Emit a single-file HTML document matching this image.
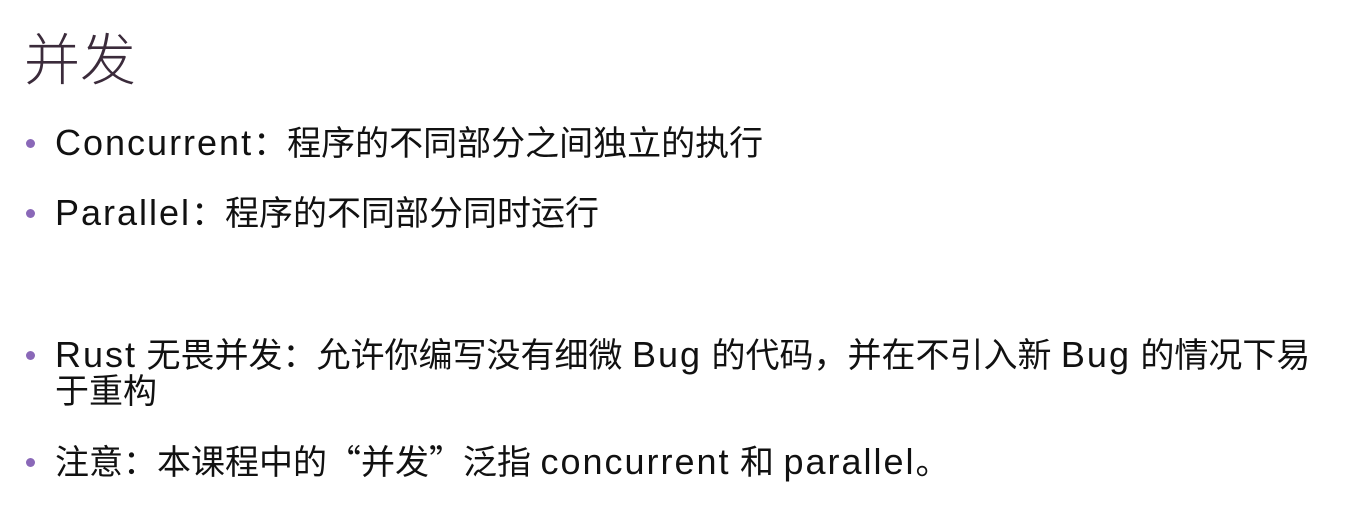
<!DOCTYPE html>
<html><head><meta charset="utf-8"><style>
body{margin:0;width:1360px;height:524px;background:#fff;overflow:hidden;position:relative;font-family:"Liberation Sans","Noto Sans CJK SC",sans-serif;}
.t{position:absolute;left:24px;top:16px;font-size:56px;color:#3b2b3b;font-family:"Noto Sans CJK SC",sans-serif;font-weight:300;}
.l{position:absolute;left:55px;font-size:34px;color:#111;white-space:nowrap;line-height:38px;}
.l .en{font-size:36px;letter-spacing:2px;}
.c{font-family:"Noto Sans CJK SC",sans-serif;}
.b{position:absolute;left:26px;width:9px;height:9px;border-radius:50%;background:#8a68b8;}
</style></head><body>
<div class="t">并发</div>
<div class="b" style="top:139px"></div>
<div class="l" style="top:122px"><span class="en">Concurrent</span><span class="c">：程序的不同部分之间独立的执行</span></div>
<div class="b" style="top:209px"></div>
<div class="l" style="top:192px"><span class="en">Parallel</span><span class="c">：程序的不同部分同时运行</span></div>
<div class="b" style="top:351px"></div>
<div class="l" style="top:334px"><span class="en">Rust</span> <span class="c">无畏并发：允许你编写没有细微</span> <span class="en">Bug</span> <span class="c">的代码，并在不引入新</span> <span class="en">Bug</span> <span class="c">的情况下易</span></div>
<div class="l" style="top:370px"><span class="c">于重构</span></div>
<div class="b" style="top:458px"></div>
<div class="l" style="top:441px"><span class="c">注意：本课程中的“并发”泛指</span> <span class="en">concurrent</span> <span class="c">和</span> <span class="en">parallel</span><span class="c">。</span></div>
</body></html>
